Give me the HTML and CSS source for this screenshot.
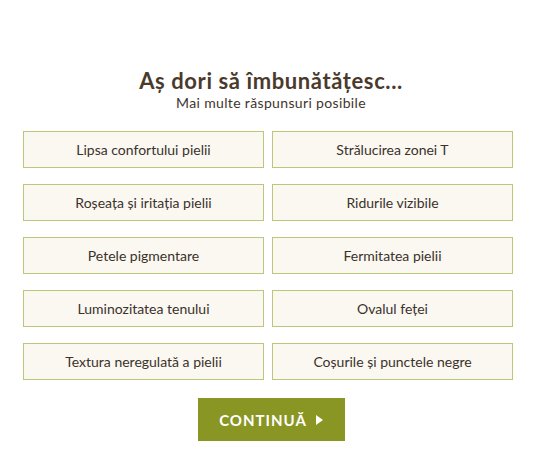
FILE: index.html
```html
<!DOCTYPE html>
<html lang="ro">
<head>
  <meta charset="UTF-8">
  <title>Chestionar</title>
  <link rel="stylesheet" href="styles.css">
</head>
<body>
<div class="quiz">
  <div class="head">
    <h1>Aș dori să îmbunătățesc...</h1>
    <p>Mai multe răspunsuri posibile</p>
  </div>
  <ul class="options">
    <li>Lipsa confortului pielii</li>
    <li>Strălucirea zonei T</li>
    <li>Roșeața și iritația pielii</li>
    <li>Ridurile vizibile</li>
    <li>Petele pigmentare</li>
    <li>Fermitatea pielii</li>
    <li>Luminozitatea tenului</li>
    <li>Ovalul feței</li>
    <li>Textura neregulată a pielii</li>
    <li>Coșurile și punctele negre</li>
  </ul>
  <div class="actions">
    <button class="next">CONTINUĂ
      <svg class="arrow" width="7" height="10" viewBox="0 0 7 10"><path d="M0 0 L7 5 L0 10 Z" fill="#fff"/></svg>
    </button>
  </div>
</div>
</body>
</html>
```

FILE: styles.css
```css
* {
  margin: 0;
  padding: 0;
  box-sizing: border-box;
}
body {
  background: #fff;
  font-family: Lato, "Open Sans", sans-serif;
  color: #3f352d;
}
.quiz {
  width: 490px;
  margin: 0 0 0 23px;
  padding-top: 68px;
}
.head {
  text-align: center;
  margin-left: 6px;
}
.head h1 {
  font-size: 22px;
  font-weight: bold;
  line-height: 26px;
  color: #4a3a2c;
  letter-spacing: 0.6px;
}
.head p {
  font-size: 14px;
  line-height: 17px;
  color: #3f352d;
  letter-spacing: 0.35px;
}
.options {
  list-style: none;
  display: grid;
  grid-template-columns: 241px 241px;
  column-gap: 8px;
  row-gap: 16px;
  margin-top: 20px;
}
.options li {
  height: 37px;
  border: 1px solid #bec67a;
  background: #faf8f1;
  font-size: 14px;
  display: flex;
  align-items: center;
  justify-content: center;
  color: #3b322b;
  padding-bottom: 1px;
}
.actions {
  display: flex;
  justify-content: center;
  margin-top: 18px;
  margin-left: 6px;
}
.next {
  width: 147px;
  height: 43px;
  border: none;
  background: #8a9623;
  color: #fff;
  font-family: Lato, sans-serif;
  font-weight: bold;
  font-size: 15px;
  letter-spacing: 1px;
  display: flex;
  align-items: center;
  justify-content: center;
}
.next .arrow {
  margin-left: 9px;
}
```
